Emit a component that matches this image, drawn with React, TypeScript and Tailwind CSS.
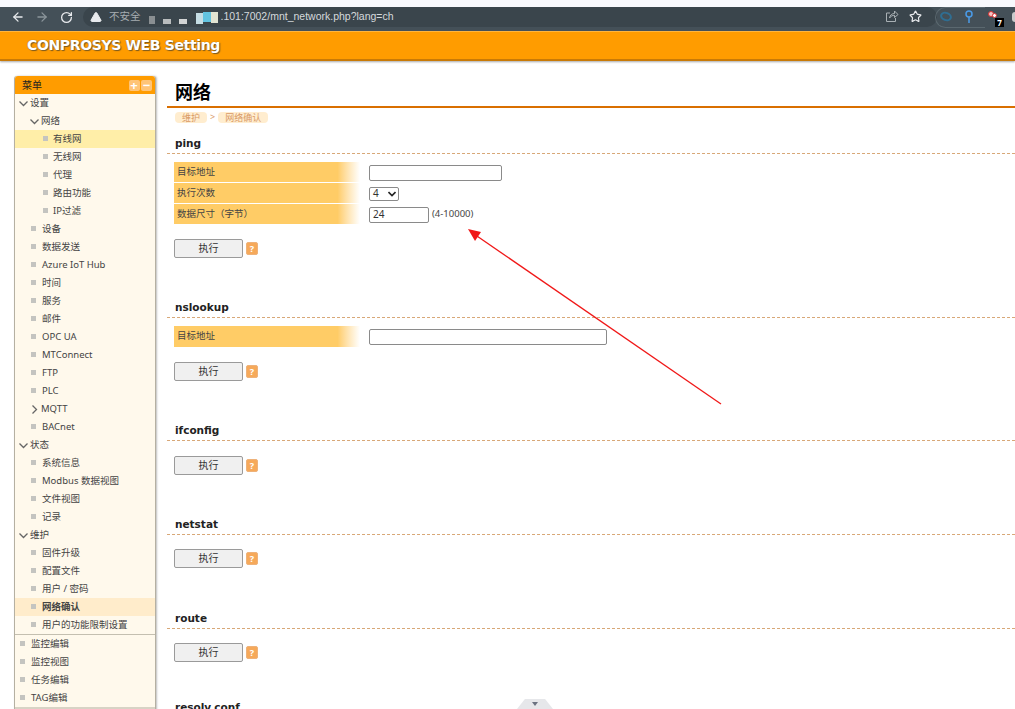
import React from "react";
import { ArrowLeft, ArrowRight, RotateCw, TriangleAlert, Star } from "lucide-react";

const FONT = '"Noto Sans","Noto Sans CJK SC",sans-serif';

type Row = { t: string; lv: 0 | 1 | 2; kind: "open" | "closed" | "leaf"; hl?: "cur" | "sel" };
const rows: Row[] = [
  { t: "设置", lv: 0, kind: "open" },
  { t: "网络", lv: 1, kind: "open" },
  { t: "有线网", lv: 2, kind: "leaf", hl: "cur" },
  { t: "无线网", lv: 2, kind: "leaf" },
  { t: "代理", lv: 2, kind: "leaf" },
  { t: "路由功能", lv: 2, kind: "leaf" },
  { t: "IP过滤", lv: 2, kind: "leaf" },
  { t: "设备", lv: 1, kind: "leaf" },
  { t: "数据发送", lv: 1, kind: "leaf" },
  { t: "Azure IoT Hub", lv: 1, kind: "leaf" },
  { t: "时间", lv: 1, kind: "leaf" },
  { t: "服务", lv: 1, kind: "leaf" },
  { t: "邮件", lv: 1, kind: "leaf" },
  { t: "OPC UA", lv: 1, kind: "leaf" },
  { t: "MTConnect", lv: 1, kind: "leaf" },
  { t: "FTP", lv: 1, kind: "leaf" },
  { t: "PLC", lv: 1, kind: "leaf" },
  { t: "MQTT", lv: 1, kind: "closed" },
  { t: "BACnet", lv: 1, kind: "leaf" },
  { t: "状态", lv: 0, kind: "open" },
  { t: "系统信息", lv: 1, kind: "leaf" },
  { t: "Modbus 数据视图", lv: 1, kind: "leaf" },
  { t: "文件视图", lv: 1, kind: "leaf" },
  { t: "记录", lv: 1, kind: "leaf" },
  { t: "维护", lv: 0, kind: "open" },
  { t: "固件升级", lv: 1, kind: "leaf" },
  { t: "配置文件", lv: 1, kind: "leaf" },
  { t: "用户 / 密码", lv: 1, kind: "leaf" },
  { t: "网络确认", lv: 1, kind: "leaf", hl: "sel" },
  { t: "用户的功能限制设置", lv: 1, kind: "leaf" },
];
const bottom = ["监控编辑", "监控视图", "任务编辑", "TAG编辑"];

function Chevron({ right }: { right?: boolean }) {
  return (
    <svg width="9" height="9" viewBox="0 0 9 9" className="shrink-0">
      <path d={right ? "M2.5 0.5 L6.5 4.5 L2.5 8.5" : "M0.5 2.5 L4.5 6.5 L8.5 2.5"} fill="none" stroke="#666" strokeWidth="1.3" />
    </svg>
  );
}

function TreeRow({ r }: { r: Row }) {
  const pad = r.lv === 0 ? "pl-[4px]" : r.lv === 1 ? (r.kind === "leaf" ? "pl-[16px]" : "pl-[15px]") : "pl-[28px]";
  const bg = r.hl === "cur" ? "bg-[#ffeea8]" : r.hl === "sel" ? "bg-[#ffeccb]" : "";
  return (
    <div className={`flex items-center h-[18px] ${pad} ${bg}`}>
      {r.kind === "leaf" ? (
        <span className={`w-[5px] h-[5px] bg-[#c4c4c0] mb-[2px] shrink-0 ${r.lv === 2 ? "mr-[5px]" : "mr-[6px]"}`} />
      ) : (
        <span className="mr-[2px] flex"><Chevron right={r.kind === "closed"} /></span>
      )}
      <span className={`text-[9.5px] whitespace-nowrap text-[#444] ${r.hl === "sel" ? "font-bold text-[#333]" : ""}`}>{r.t}</span>
    </div>
  );
}

function Sidebar() {
  return (
    <aside className="w-[142px] shrink-0 ml-[14px] mt-[15px] self-start border-x border-[#b5b0a2] bg-[#fff9ec] rounded-t-[3px] shadow-[1px_0_2px_rgba(0,0,0,0.25)]">
      <div className="h-[18px] bg-[#ff9c00] rounded-t-[3px] flex items-center pl-[7px] pr-[3px]">
        <span className="text-[10px] text-[#222] flex-1">菜单</span>
        <span className="w-[11px] h-[11px] bg-[#ffc477] rounded-[2px] text-white text-[13px] leading-[10px] text-center font-bold mr-[1.5px]">+</span>
        <span className="w-[11px] h-[11px] bg-[#ffc477] rounded-[2px] text-white text-[13px] leading-[10px] text-center font-bold">−</span>
      </div>
      {rows.map((r) => <TreeRow key={r.t} r={r} />)}
      <div className="border-t border-[#c4bfb0]">
        {bottom.map((t) => (
          <div key={t} className="flex items-center h-[18px] pl-[5px]">
            <span className="w-[5px] h-[5px] bg-[#c4c4c0] mr-[6px] mb-[2px] shrink-0" />
            <span className="text-[9.5px] text-[#444] whitespace-nowrap">{t}</span>
          </div>
        ))}
      </div>
      <div className="border-t-2 border-[#d8d3c5] h-[6px]" />
    </aside>
  );
}

function HeadText({ t }: { t: string }) {
  return <span className="text-[10.5px] font-bold text-[#222] pl-[8px] leading-[16px]" style={{ fontFamily: '"DejaVu Sans",sans-serif' }}>{t}</span>;
}

function Heading({ t, h }: { t: string; h: string }) {
  return (
    <div className={`${h} border-b border-dashed border-[#d8a878] flex items-end pb-[2px]`}>
      <HeadText t={t} />
    </div>
  );
}

function LabelCell({ t, h }: { t: string; h: string }) {
  return (
    <div className={`w-[186px] ${h} flex items-center pl-[3px] text-[9.5px] text-[#444] bg-gradient-to-r from-[#ffcc66] from-[88%] to-white mb-px`}>{t}</div>
  );
}

function RunBtn() {
  return (
    <div className="flex items-center ml-[7px]">
      <div className="w-[69px] h-[19px] border border-[#9a9a9a] rounded-[2px] bg-[#f0f0f0] flex items-center justify-center text-[10px] text-[#333]">执行</div>
      <div className="w-[12px] h-[13px] ml-[3px] rounded-[2px] bg-[#f6a95a] border border-[#eeb27a] text-white text-[9px] font-bold leading-[11px] text-center">?</div>
    </div>
  );
}

const inputCls = "h-[16px] border border-[#8a8a8a] rounded-[2px] bg-white text-[10px] text-[#333] flex items-center pl-[3px]";

function Main() {
  return (
    <main className="flex-1 min-w-0 ml-[11px]">
      <div className="h-[31px] mt-[16px] border-b-2 border-[#d96f00] pl-[8px] flex items-center">
        <span className="text-[18px] font-bold text-black leading-none">网络</span>
      </div>
      <div className="flex items-center pl-[8px] h-[10px] mt-[4px] text-[9px] text-[#d99a66]">
        <span className="bg-[#ffedcf] rounded-[4px] px-[7px] leading-[11px]">维护</span>
        <span className="mx-[3px] text-[#d99a66]">&gt;</span>
        <span className="bg-[#ffedcf] rounded-[4px] px-[7px] leading-[11px]">网络确认</span>
      </div>

      <Heading t="ping" h="h-[32px]" />
      <div className="ml-[7px] mt-[8px] flex">
        <div className="flex flex-col">
          <LabelCell t="目标地址" h="h-[20px]" />
          <LabelCell t="执行次数" h="h-[20px]" />
          <LabelCell t="数据尺寸（字节）" h="h-[20px]" />
        </div>
        <div className="flex flex-col ml-[9px]">
          <div className="h-[21px] flex items-center"><div className={`${inputCls} w-[133px]`} /></div>
          <div className="h-[21px] flex items-center">
            <div className={`${inputCls} w-[30px] !h-[14px] justify-between pr-[2px]`}>
              <span>4</span>
              <svg width="8" height="6" viewBox="0 0 8 6"><path d="M0.5 1 L4 4.5 L7.5 1" fill="none" stroke="#222" strokeWidth="1.6" /></svg>
            </div>
          </div>
          <div className="h-[21px] flex items-center">
            <div className={`${inputCls} w-[60px]`}>24</div>
            <span className="ml-[3px] text-[9.5px] text-[#444]">(4-10000)</span>
          </div>
        </div>
      </div>
      <div className="mt-[14px]"><RunBtn /></div>

      <Heading t="nslookup" h="h-[60px]" />
      <div className="ml-[7px] mt-[8px] flex items-center">
        <LabelCell t="目标地址" h="h-[21px]" />
        <div className={`${inputCls} w-[238px] ml-[9px]`} />
      </div>
      <div className="mt-[14px]"><RunBtn /></div>

      <Heading t="ifconfig" h="h-[60px]" />
      <div className="mt-[15px]"><RunBtn /></div>

      <Heading t="netstat" h="h-[60px]" />
      <div className="mt-[14px]"><RunBtn /></div>

      <Heading t="route" h="h-[61px]" />
      <div className="mt-[14px]"><RunBtn /></div>

      <div className="h-[53px] flex items-end">
        <HeadText t="resolv.conf" />
      </div>
    </main>
  );
}

function BrowserBar() {
  return (
    <div className="relative h-[24px] bg-[#445058] shrink-0">
      <div className="h-[20px] flex items-center">
        <ArrowLeft size={14} color="#e8eaed" strokeWidth={2.2} className="ml-[11px]" />
        <ArrowRight size={14} color="#8b959b" strokeWidth={2.2} className="ml-[10px]" />
        <RotateCw size={13} color="#e8eaed" strokeWidth={2.4} className="ml-[11px]" />
        <div className="ml-[10px] w-[854px] h-[20px] rounded-[10px] bg-[#3a454c] flex items-center pl-[7px] text-[10.5px] text-[#d5d9dc] whitespace-nowrap" style={{ fontFamily: '"Liberation Sans","Noto Sans CJK SC",sans-serif' }}>
          <TriangleAlert size={12} color="#e8eaed" fill="#e8eaed" stroke="#e8eaed" />
          <span className="ml-[7px] opacity-70">不安全</span>
          <span className="w-[6px] h-[8px] bg-[#8a8f92] mt-[6px] ml-[8px]" />
          <span className="w-[8px] h-[5px] bg-[#b9bcbd] mt-[8px] ml-[8px]" />
          <span className="w-[8px] h-[5px] bg-[#d2d4d4] mt-[8px] ml-[8px]" />
          <span className="w-[7px] h-[11px] bg-[#c5dde4] ml-[9px] mt-[2px]" />
          <span className="w-[8px] h-[10px] bg-[#62c3e0]" />
          <span className="w-[7px] h-[11px] bg-[#e2e4d2]" />
          <span className="ml-[3px]">.101:7002/mnt_network.php?lang=ch</span>
        </div>
      </div>
      <svg className="absolute left-[885px] top-[2px]" width="14" height="14" viewBox="0 0 14 14" fill="none" stroke="#a9b0b4" strokeWidth="1">
        <path d="M5 4 H1.5 V12.5 H10.5 V9" />
        <path d="M4.5 9 C5 6 7 4.5 9.5 4.5 V2 L13 5.5 L9.5 8.5 V6.3 C7.5 6.3 6 7 4.5 9 Z" />
      </svg>
      <Star size={13} color="#e8eaed" strokeWidth={2.2} className="absolute left-[909px] top-[3px]" />
      <div className="absolute left-[935px] top-0 w-[50px] h-[21px] rounded-l-[11px] border border-[#5b686f] border-r-0" />
      <svg className="absolute left-[940px] top-[4px]" width="12" height="11" viewBox="0 0 12 11" fill="none" stroke="#2f6e92" strokeWidth="2">
        <ellipse cx="6" cy="5.5" rx="5" ry="3.6" transform="rotate(20 6 5.5)" />
      </svg>
      <svg className="absolute left-[965px] top-[3px]" width="8" height="14" viewBox="0 0 8 14" fill="none" stroke="#4a9be8" strokeWidth="1.5">
        <circle cx="4" cy="4" r="3" />
        <path d="M4 7 V13" />
      </svg>
      <div className="absolute left-[988px] top-[4px] w-[6px] h-[6px] rounded-full bg-[#f1c6c6] border border-[#d33]" />
      <div className="absolute left-[992px] top-[6px] w-[5px] h-[5px] rounded-full bg-white border border-[#d33]" />
      <div className="absolute left-[995px] top-[11px] w-[9px] h-[9px] bg-black text-white text-[8px] leading-[9px] text-center font-bold">7</div>
      <div className="absolute left-[1012px] top-[5px] w-[6px] h-[10px] rounded-full bg-[#c9cbcc]" />
    </div>
  );
}

export default function App() {
  return (
    <div className="relative w-[1015px] h-[709px] overflow-hidden bg-white flex flex-col" style={{ fontFamily: FONT }}>
      <div className="h-[7px] bg-[#f8f9fd] shrink-0" />
      <BrowserBar />
      <div className="h-[30px] shrink-0 bg-[#ff9c00] border-t border-[#ffb53d] border-b-2 border-b-[#c97a06] shadow-[0_1px_2px_rgba(0,0,0,0.35)] flex items-center pl-[27px]">
        <span className="text-[14px] font-bold text-white" style={{ fontFamily: '"DejaVu Sans",sans-serif', textShadow: "1px 1px 1px #7a5a20, 0 0 1px #7a5a20", letterSpacing: "-0.35px" }}>CONPROSYS WEB Setting</span>
      </div>
      <div className="flex flex-1 min-h-0">
        <Sidebar />
        <Main />
      </div>
      <svg className="absolute left-[460px] top-[222px]" width="270" height="190" viewBox="0 0 270 190">
        <path d="M261 182 L14 12" stroke="#f01818" strokeWidth="1.3" fill="none" />
        <path d="M8 7 L21 10 L15 19 Z" fill="#f01818" />
      </svg>
      <div className="absolute left-[517px] top-[699px] w-[36px] h-[10px] bg-[#e6e7ea] [clip-path:polygon(22%_0,78%_0,100%_100%,0_100%)] flex justify-center pt-[3px]">
        <div className="w-[6px] h-[4px] bg-[#6b7280] [clip-path:polygon(0_0,100%_0,50%_100%)]" />
      </div>
    </div>
  );
}
